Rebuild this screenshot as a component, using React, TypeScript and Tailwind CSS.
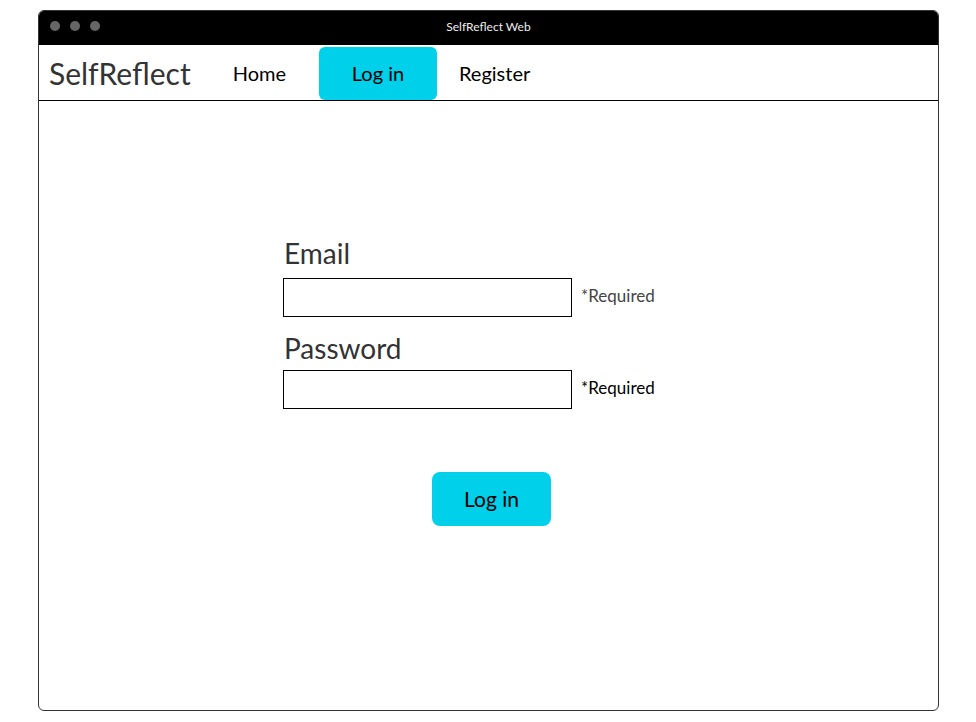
import React from 'react';

const font = { fontFamily: '"Lato", "Liberation Sans", sans-serif' };

const Field = ({ label, muted, top }: { label: string; muted?: boolean; top: string }) => (
  <div className="flex flex-col">
    <label className="text-[28px] leading-[34px] text-[#333] pl-[1px]">{label}</label>
    <div className={`${top} flex items-center`}>
      <input className="h-[39px] w-[289px] border border-black bg-white outline-none" />
      <span className={`ml-[9px] pb-[4px] text-[17px] ${muted ? 'text-[#444]' : 'text-black'}`}>*Required</span>
    </div>
  </div>
);

export default function App() {
  return (
    <div className="min-h-screen bg-white pt-[10px] pl-[38px]" style={font}>
      <div className="flex h-[701px] w-[901px] flex-col overflow-hidden rounded-[6px] border border-[#333]">
        {/* title bar */}
        <div className="relative flex h-[34px] items-center bg-black pb-[4px]">
          <div className="flex gap-[10px] pl-[11px]">
            <span className="h-[10px] w-[10px] rounded-full bg-[#666]" />
            <span className="h-[10px] w-[10px] rounded-full bg-[#666]" />
            <span className="h-[10px] w-[10px] rounded-full bg-[#666]" />
          </div>
          <div className="absolute inset-0 flex items-center justify-center pb-[3px] text-[12px] text-[#eee]">
            SelfReflect Web
          </div>
        </div>

        {/* nav */}
        <nav className="flex h-[56px] items-center border-b border-black pt-[1px]">
          <span className="ml-[10px] text-[30px] text-[#333]">SelfReflect</span>
          <a className="ml-[42px] text-[20px] text-black">Home</a>
          <a className="ml-[33px] flex h-[53px] w-[118px] items-center justify-center rounded-[6px] bg-[#00d0ea] text-[20px] text-black">
            Log in
          </a>
          <a className="ml-[22px] text-[20px] text-black">Register</a>
        </nav>

        {/* form */}
        <div className="flex flex-1 flex-col pt-[135px]">
          <div className="ml-[244px] flex flex-col gap-[14px]">
            <Field label="Email" muted top="mt-[8px]" />
            <Field label="Password" top="mt-[5px]" />
          </div>
          <div className="mt-[63px] flex justify-center pl-[6px]">
            <button className="h-[54px] w-[119px] rounded-[8px] bg-[#00d0ea] text-[21px] text-black">Log in</button>
          </div>
        </div>
      </div>
    </div>
  );
}
